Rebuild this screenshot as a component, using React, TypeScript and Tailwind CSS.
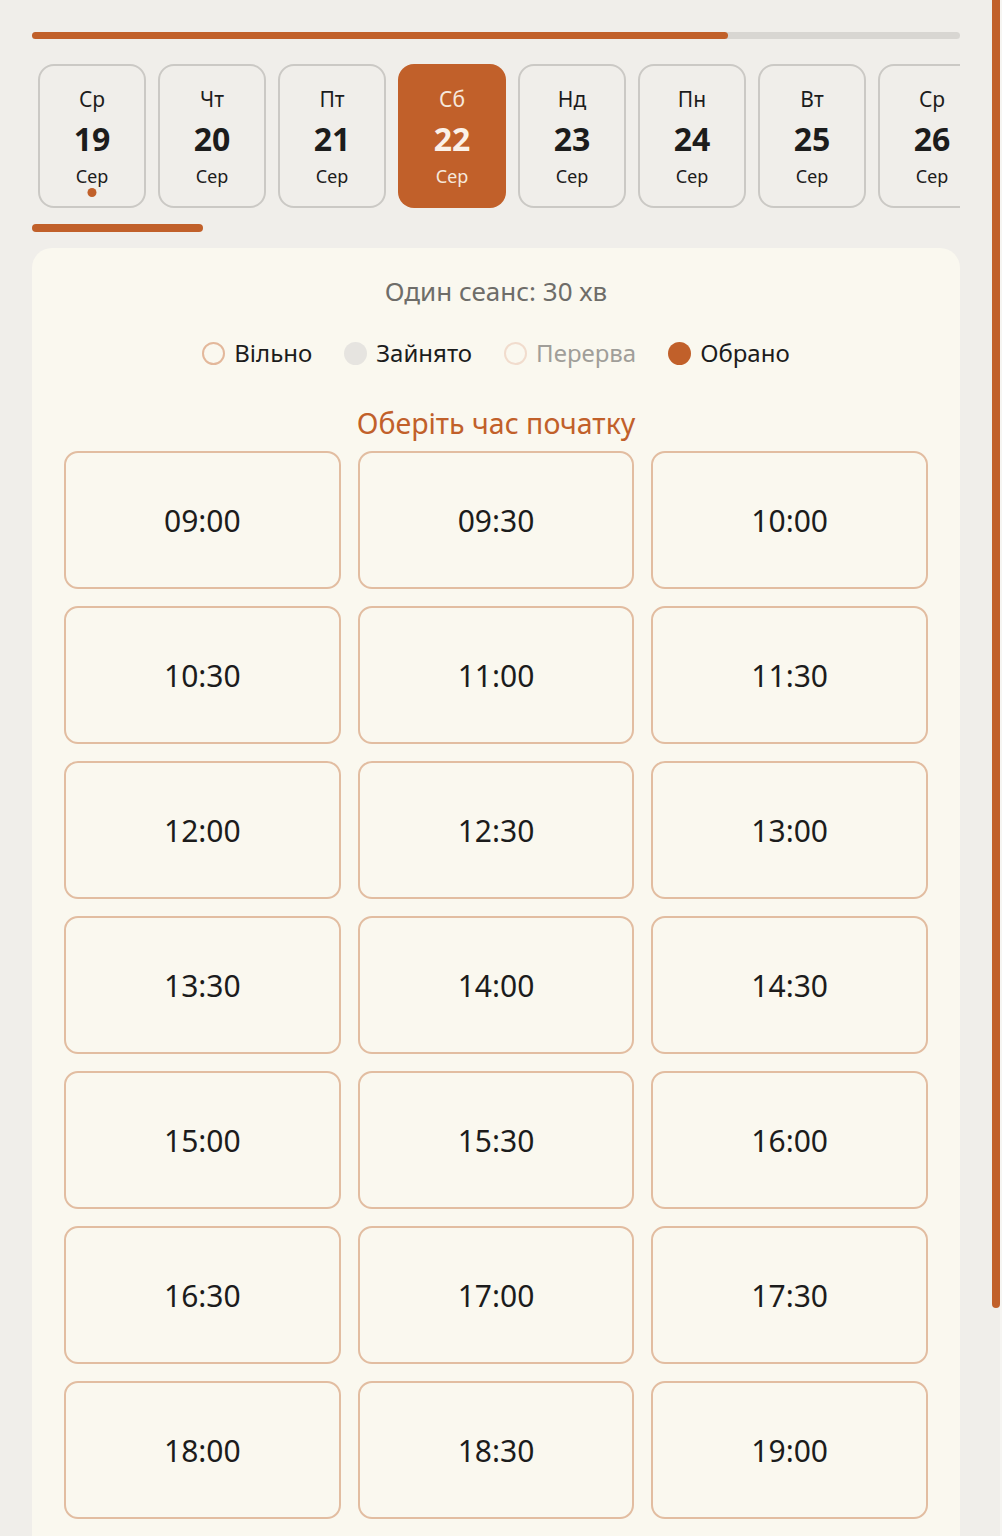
import React from "react";

const days = [
  { d: "Ср", n: "19", dot: true },
  { d: "Чт", n: "20" },
  { d: "Пт", n: "21" },
  { d: "Сб", n: "22", sel: true },
  { d: "Нд", n: "23" },
  { d: "Пн", n: "24" },
  { d: "Вт", n: "25" },
  { d: "Ср", n: "26" },
];

const times = [
  "09:00", "09:30", "10:00",
  "10:30", "11:00", "11:30",
  "12:00", "12:30", "13:00",
  "13:30", "14:00", "14:30",
  "15:00", "15:30", "16:00",
  "16:30", "17:00", "17:30",
  "18:00", "18:30", "19:00",
  "19:30", "20:00", "20:30",
];

export default function App() {
  return (
    <div
      className="flex w-[1002px] h-[1536px] overflow-hidden bg-[#f0eeea]"
      style={{ fontFamily: '"Noto Sans", "Open Sans", sans-serif' }}
    >
      <div className="w-[992px] shrink-0 pl-8 pr-8 pt-8">
        {/* progress */}
        <div className="h-[7px] w-full rounded-full bg-[#d8d6d2]">
          <div className="h-full w-[75%] rounded-full bg-[#c1602a]" />
        </div>

        {/* dates */}
        <div className="mt-[25px] overflow-hidden">
          <div className="flex gap-[12px] pl-[6px]">
            {days.map((x, i) =>
              x.sel ? (
                <div
                  key={i}
                  className="relative flex h-[144px] w-[108px] shrink-0 flex-col items-center rounded-[16px] bg-[#c1602a] text-[#f6e8dc]"
                >
                  <div className="mt-[21px] text-[21px] leading-[28px]">{x.d}</div>
                  <div className="mt-[6px] text-[32px] font-bold leading-[40px] text-[#fbf1e8]">{x.n}</div>
                  <div className="mt-[4px] text-[18px] leading-[26px]">Сер</div>
                </div>
              ) : (
                <div
                  key={i}
                  className="relative flex h-[144px] w-[108px] shrink-0 flex-col items-center rounded-[16px] border-2 border-[#cbc9c5] text-[#1c1c1c]"
                >
                  <div className="mt-[19px] text-[21px] leading-[28px]">{x.d}</div>
                  <div className="mt-[6px] text-[32px] font-bold leading-[40px]">{x.n}</div>
                  <div className="mt-[4px] text-[18px] leading-[26px]">Сер</div>
                  {x.dot && (
                    <div className="absolute left-1/2 top-[122px] h-[9px] w-[9px] -translate-x-1/2 rounded-full bg-[#c1602a]" />
                  )}
                </div>
              )
            )}
          </div>
        </div>

        {/* scroll indicator */}
        <div className="mt-4 h-2 w-[171px] rounded-full bg-[#c1602a]" />

        {/* main card */}
        <div className="mt-4 rounded-[20px] bg-[#faf8ef] px-8 pt-[26px] pb-8">
          <div className="text-center text-[26px] leading-[34px] text-[#6e6d69]">
            Один сеанс: 30 хв
          </div>

          <div className="mt-[29px] flex items-center justify-center gap-8 text-[24px] leading-[32px]">
            <div className="flex items-center gap-[9px]">
              <span className="h-[23px] w-[23px] rounded-full border-[2.5px] border-[#e3b89b]" />
              <span className="text-[#1c1c1c]">Вільно</span>
            </div>
            <div className="flex items-center gap-[9px]">
              <span className="h-[23px] w-[23px] rounded-full bg-[#e6e4e0]" />
              <span className="text-[#1c1c1c]">Зайнято</span>
            </div>
            <div className="flex items-center gap-[9px]">
              <span className="h-[23px] w-[23px] rounded-full border-[2.5px] border-[#f1dccd]" />
              <span className="text-[#a09e99]">Перерва</span>
            </div>
            <div className="flex items-center gap-[9px]">
              <span className="h-[23px] w-[23px] rounded-full bg-[#c1602a]" />
              <span className="text-[#1c1c1c]">Обрано</span>
            </div>
          </div>

          <div className="mt-[35px] text-center text-[28.5px] leading-[38px] text-[#c1602a]">
            Оберіть час початку
          </div>

          <div className="mt-[9px] grid grid-cols-3 gap-x-[17px] gap-y-[17px]">
            {times.map((t) => (
              <div
                key={t}
                className="flex h-[138px] items-center justify-center rounded-[14px] border-2 border-[#e2bda1] text-[30px] text-[#1c1c1c]"
              >
                {t}
              </div>
            ))}
          </div>
        </div>
      </div>
      <div className="h-[1308px] w-[8px] shrink-0 rounded-b-full bg-[#c1602a]" />
      <div className="flex-1 bg-[#f6f5f2]" />
    </div>
  );
}
